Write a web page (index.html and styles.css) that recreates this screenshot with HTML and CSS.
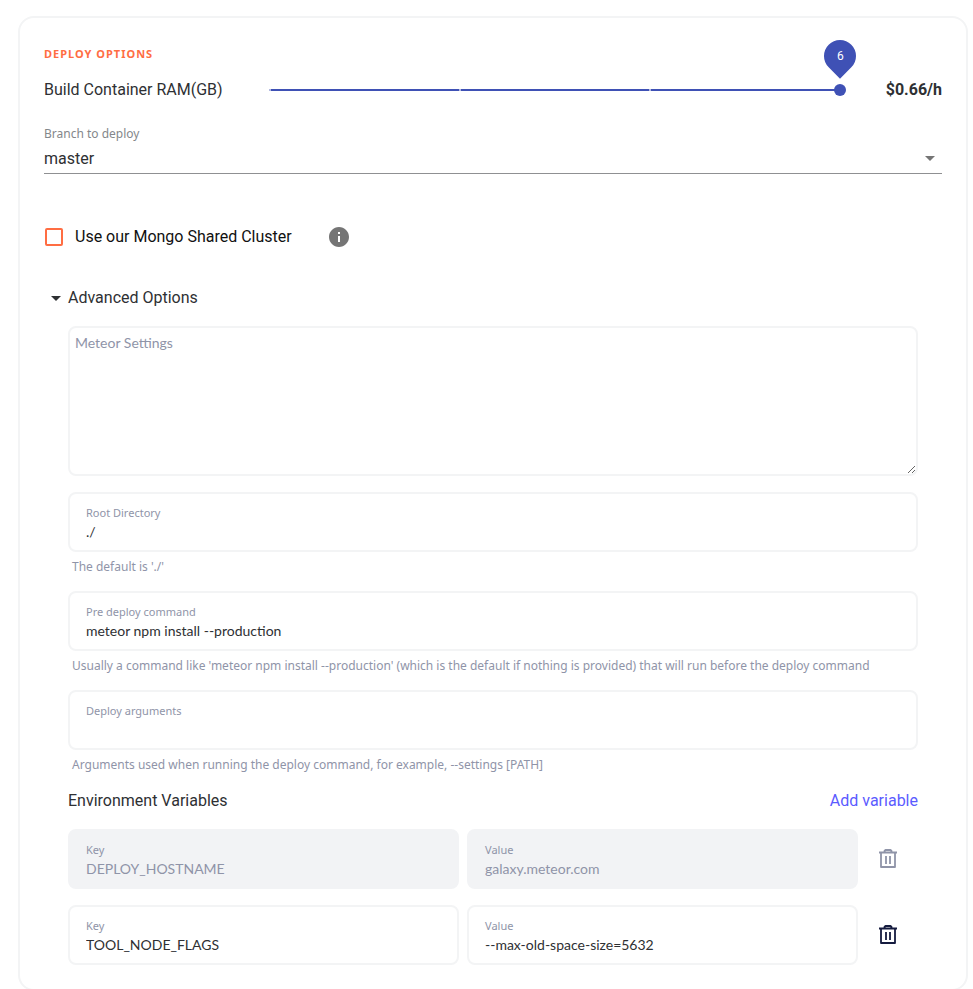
FILE: index.html
```html
<!DOCTYPE html>
<html lang="en">
<head>
<meta charset="utf-8">
<title>Deploy options</title>
<link rel="stylesheet" href="styles.css">
</head>
<body>
<svg class="sprite" aria-hidden="true">
  <symbol id="trash" viewBox="0 0 24 24">
    <path d="M3 5.500h18M5 5.500V20h14V5.500M8.500 5V4L9.500 3h5l1 1v1M10 9v8M14 9v8" fill="none" stroke="currentColor" stroke-width="1.800" stroke-linejoin="round"/>
  </symbol>
  <symbol id="caret" viewBox="0 0 24 24"><path d="M7 10l5 5 5-5z" fill="currentColor"/></symbol>
</svg>
<form class="card">
  <h2 class="eyebrow">DEPLOY OPTIONS</h2>
  <div class="ram">
    <label for="ram">Build Container RAM(GB)</label>
    <div class="slider">
      <input id="ram" type="range" min="0" max="6" step="2" value="6">
      <output class="bubble" for="ram"><span>6</span></output>
    </div>
    <strong class="price">$0.66/h</strong>
  </div>

  <div class="branch">
    <label for="branch">Branch to deploy</label>
    <div class="select">
      <select id="branch"><option>master</option></select>
      <svg class="icon"><use href="#caret"/></svg>
    </div>
  </div>

  <div class="mongo">
    <label><input type="checkbox">Use our Mongo Shared Cluster</label>
    <svg class="icon info" viewBox="0 0 24 24" role="img" aria-label="Info"><path fill="currentColor" d="M12 2C6.480 2 2 6.480 2 12s4.480 10 10 10 10-4.480 10-10S17.520 2 12 2zm1 15h-2v-6h2v6zm0-8h-2V7h2v2z"/></svg>
  </div>

  <details class="advanced" open>
    <summary><svg class="icon"><use href="#caret"/></svg>Advanced Options</summary>
    <div class="stack">
      <textarea aria-label="Meteor Settings" placeholder="Meteor Settings"></textarea>
      <div>
        <label class="field">Root Directory<input type="text" value="./"></label>
        <p class="hint">The default is './'</p>
      </div>
      <div>
        <label class="field">Pre deploy command<input type="text" value="meteor npm install --production"></label>
        <p class="hint">Usually a command like 'meteor npm install --production' (which is the default if nothing is provided) that will run before the deploy command</p>
      </div>
      <div>
        <label class="field">Deploy arguments<input type="text"></label>
        <p class="hint">Arguments used when running the deploy command, for example, --settings [PATH]</p>
      </div>
      <div class="env-head">
        <h3>Environment Variables</h3>
        <button type="button" class="add">Add variable</button>
      </div>
      <div class="env">
        <label class="field locked">Key<input type="text" value="DEPLOY_HOSTNAME" disabled></label>
        <label class="field locked">Value<input type="text" value="galaxy.meteor.com" disabled></label>
        <button type="button" class="trash" aria-label="Delete variable" disabled><svg class="icon"><use href="#trash"/></svg></button>
      </div>
      <div class="env">
        <label class="field">Key<input type="text" value="TOOL_NODE_FLAGS"></label>
        <label class="field">Value<input type="text" value="--max-old-space-size=5632"></label>
        <button type="button" class="trash" aria-label="Delete variable"><svg class="icon"><use href="#trash"/></svg></button>
      </div>
    </div>
  </details>
</form>
</body>
</html>
```
FILE: styles.css
```css
:root {
  --line: #f3f4f5;
  --text: #2e3033;
  --muted: #8f94a8;
  --blue: #3f51b5;
  --orange: #ff6d43;
  --small: "Noto Sans", sans-serif;
}
* { box-sizing: border-box; }
html { scrollbar-width: none; }
body {
  margin: 0;
  padding: 16px 5px 0 18px;
  background: #fff;
  color: var(--text);
  font: 16px/24px Roboto, sans-serif;
}
h2, h3, p { margin: 0; font-weight: 400; }
input, select, textarea, button { font: inherit; color: inherit; margin: 0; }
button { border: 0; padding: 0; background: none; }
.sprite { display: none; }
.icon { display: block; width: 24px; height: 24px; flex: none; }

.card { border: 2px solid var(--line); border-radius: 16px; padding: 24px; }
.eyebrow { color: var(--orange); font: 700 11px/24px var(--small); letter-spacing: 1px; }

.ram { display: grid; grid-template-columns: 220px 1fr 96px; align-items: center; height: 48px; }
.price { text-align: right; }
.slider { position: relative; display: flex; }
.slider input {
  appearance: none;
  width: 100%;
  height: 12px;
  background: none;
}
.slider input::-webkit-slider-runnable-track {
  height: 12px;
  background:
    repeating-linear-gradient(90deg, #b2b9e1 0 2px, transparent 2px calc(100% / 3)) 5px 5px / calc(100% - 12px) 2px no-repeat,
    linear-gradient(var(--blue), var(--blue)) 5px 5px / calc(100% - 11px) 2px no-repeat;
}
.slider input::-webkit-slider-thumb {
  appearance: none;
  width: 12px;
  height: 12px;
  border-radius: 50%;
  background: var(--blue);
}
.bubble {
  position: absolute;
  right: -10px;
  bottom: 24px;
  width: 32px;
  height: 32px;
  border-radius: 50% 50% 0 50%;
  transform: rotate(45deg);
  background: var(--blue);
  display: grid;
  place-items: center;
  color: #fff;
  font-size: 12px;
}
.bubble span { transform: rotate(-45deg); }

.branch { margin-top: 10px; }
.branch label { display: block; color: #84878b; font: 12px/20px var(--small); }
.select { position: relative; }
.select select {
  appearance: none;
  display: block;
  width: 100%;
  height: 30px;
  padding: 0 24px 0 0;
  border: 0;
  border-bottom: 1px solid #8f9092;
  background: none;
}
.select .icon { position: absolute; right: 0; top: 2px; color: #757575; pointer-events: none; }

.mongo { display: flex; align-items: center; gap: 35px; margin-top: 51px; color: #111; }
.mongo label { display: flex; align-items: center; gap: 12px; }
.mongo input {
  appearance: none;
  width: 18px;
  height: 18px;
  margin-left: 1px;
  border: 2px solid var(--orange);
  border-radius: 2px;
}
.info { color: #757575; }

.advanced { margin-top: 37px; }
.advanced summary { display: flex; list-style: none; }
.stack { display: grid; gap: 16px; padding: 16px 24px 0; }
textarea {
  display: block;
  width: 100%;
  height: 150px;
  padding: 5px;
  border: 2px solid var(--line);
  border-radius: 8px;
  background: #fff;
  font: 14px/20px Lato, sans-serif;
  resize: vertical;
}
textarea::placeholder { color: var(--muted); }
.field {
  display: block;
  min-width: 0;
  padding: 10px 16px 8px;
  border: 2px solid var(--line);
  border-radius: 8px;
  color: var(--muted);
  font: 11px/18px var(--small);
}
.field input {
  display: block;
  width: 100%;
  height: 20px;
  padding: 0;
  border: 0;
  outline: 0;
  background: none;
  color: var(--text);
  font: 14px/20px Lato, sans-serif;
}
.locked { background: #f2f3f5; border-color: #f2f3f5; }
.locked input { color: var(--muted); }
.hint { margin: 7px 4px 0; color: var(--muted); font: 12px/16px var(--small); }
.env-head { display: flex; justify-content: space-between; }
h3 { font-size: 16px; }
.add { color: #5b5bff; }
.env { display: grid; grid-template-columns: 1fr 1fr 52px; gap: 8px; }
.trash { display: grid; place-items: center start; padding-left: 10px; color: #151b3f; }
.trash:disabled { color: var(--muted); }
```
